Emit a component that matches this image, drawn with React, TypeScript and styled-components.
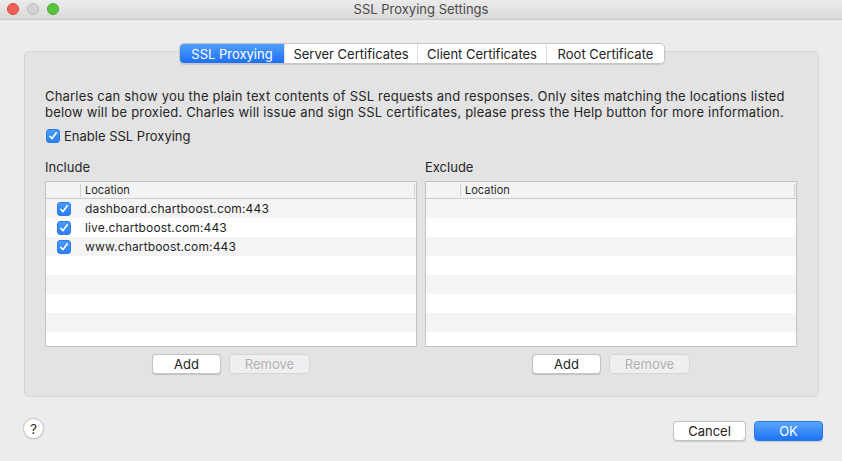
import React from "react";
import styled, { createGlobalStyle } from "styled-components";

const Global = createGlobalStyle`
  html, body { margin: 0; padding: 0; }
  body {
    background: #ececec;
    font-family: Inter, "Noto Sans", "Liberation Sans", sans-serif;
    font-size: 13px;
    color: #262626;
    -webkit-font-smoothing: antialiased;
  }
  * { box-sizing: border-box; }
`;

const Window = styled.div`
  width: 842px;
  height: 461px;
  background: #ececec;
  display: flex;
  flex-direction: column;
  overflow: hidden;
`;

const TitleBar = styled.div`
  position: relative;
  height: 20px;
  flex: none;
  border-bottom: 1px solid #c9c9c9;
  background: linear-gradient(#ebebeb, #d9d9d9);
  display: flex;
  align-items: center;
  justify-content: center;
`;

const Lights = styled.div`
  position: absolute;
  left: 7px;
  top: 3px;
  display: flex;
  gap: 8px;
`;

const Light = styled.span<{ $c: string; $b: string }>`
  width: 12px;
  height: 12px;
  border-radius: 50%;
  background: ${(p) => p.$c};
  border: 0.5px solid ${(p) => p.$b};
`;

const Title = styled.div`
  font-size: 13px;
  color: #4a4a4a;
  line-height: 19px;
`;

const Main = styled.div`
  flex: 1;
  display: flex;
  flex-direction: column;
  padding: 23px 23px 0 24px;
`;

const TabBar = styled.div`
  position: relative;
  z-index: 1;
  align-self: center;
  display: flex;
  height: 21px;
  margin-left: 1px;
  border: 1px solid #c6c6c6;
  border-radius: 5px;
  background: #fff;
  box-shadow: 0 0.5px 1px rgba(0, 0, 0, 0.12);
  overflow: hidden;
`;

const Tab = styled.div<{ $active?: boolean; $w: number }>`
  width: ${(p) => p.$w}px;
  display: flex;
  align-items: center;
  justify-content: center;
  font-size: 13px;
  color: ${(p) => (p.$active ? "#fff" : "#222")};
  background: ${(p) =>
    p.$active ? "linear-gradient(#519ffb, #1c6ff4)" : "#fff"};
  border-left: ${(p) => (p.$active ? "none" : "1px solid #dcdcdc")};
  &:first-child { border-left: none; }
`;

const Group = styled.div`
  margin-top: -13px;
  height: 346px;
  border: 1px solid #d6d6d6;
  border-radius: 5px;
  background: #e3e3e3;
  padding: 36px 21px 0 20px;
  display: flex;
  flex-direction: column;
`;

const Description = styled.p`
  margin: 0;
  font-size: 13px;
  line-height: 16px;
  letter-spacing: 0.19px;
  color: #262626;
  white-space: nowrap;
`;

const CheckRow = styled.label`
  margin-top: 8px;
  display: flex;
  align-items: center;
  gap: 4px;
  height: 16px;
  padding-left: 1px;
`;

const Box = styled.span`
  width: 14px;
  height: 14px;
  border-radius: 3px;
  background: linear-gradient(#4a9bfa, #2a7ff4);
  border: 0.5px solid #2f7de6;
  display: inline-flex;
  align-items: center;
  justify-content: center;
  flex: none;
`;

const Columns = styled.div`
  margin-top: 15px;
  display: grid;
  grid-template-columns: 372px 372px;
  gap: 8px;
`;

const Column = styled.div`
  display: flex;
  flex-direction: column;
`;

const Label = styled.div`
  height: 16px;
  line-height: 16px;
  font-size: 13px;
`;

const Table = styled.div`
  margin-top: 6px;
  height: 166px;
  border: 1px solid #c2c2c2;
  background: #fff;
  display: flex;
  flex-direction: column;
  overflow: hidden;
`;

const Header = styled.div`
  flex: none;
  height: 17px;
  border-bottom: 1px solid #cbcbcb;
  background: #f3f3f3;
  display: flex;
  align-items: center;
`;

const HeadCheck = styled.div`
  width: 35px;
  height: 13px;
  flex: none;
  border-right: 1px solid #d2d2d2;
`;

const HeadCell = styled.div`
  flex: 1;
  height: 13px;
  padding-left: 4px;
  font-size: 11px;
  line-height: 13px;
  color: #2a2a2a;
  border-right: 1px solid #d2d2d2;
  margin-right: 1px;
`;

const Row = styled.div<{ $alt: boolean }>`
  flex: none;
  height: 19px;
  display: flex;
  align-items: center;
  background: ${(p) => (p.$alt ? "#f4f4f4" : "#fff")};
`;

const CheckCell = styled.div`
  width: 35px;
  flex: none;
  display: flex;
  justify-content: center;
  padding-left: 1px;
`;

const TextCell = styled.div`
  padding-left: 4px;
  font-size: 12px;
  letter-spacing: 0.15px;
  color: #1f1f1f;
`;

const ButtonRow = styled.div`
  margin-top: 7px;
  display: flex;
  justify-content: center;
  gap: 8px;
`;

const Button = styled.button<{ $w: number; $disabled?: boolean; $primary?: boolean }>`
  width: ${(p) => p.$w}px;
  height: 20px;
  padding: 0;
  font-family: inherit;
  font-size: 13px;
  border-radius: 4px;
  color: ${(p) => (p.$primary ? "#fff" : p.$disabled ? "#b2b2b2" : "#222")};
  background: ${(p) =>
    p.$primary
      ? "linear-gradient(#5aa6fc, #1e72f5)"
      : p.$disabled
      ? "#efefef"
      : "#fff"};
  border: 1px solid
    ${(p) => (p.$primary ? "#2b78ee" : p.$disabled ? "#d6d6d6" : "#c3c3c3")};
  box-shadow: ${(p) => (p.$disabled ? "none" : "0 0.5px 1px rgba(0,0,0,0.15)")};
`;

const Footer = styled.div`
  height: 65px;
  flex: none;
  display: flex;
  align-items: flex-start;
  justify-content: space-between;
  padding: 24px 19px 0 23px;
`;

const Help = styled.div`
  width: 21px;
  height: 21px;
  margin-top: -3px;
  border-radius: 50%;
  background: #fff;
  border: 1px solid #c8c8c8;
  box-shadow: 0 0.5px 1px rgba(0, 0, 0, 0.15);
  display: flex;
  align-items: center;
  justify-content: center;
  font-size: 13px;
  color: #222;
`;

const FooterButtons = styled.div`
  display: flex;
  gap: 8px;
`;

const Check = () => (
  <Box>
    <svg width="10" height="10" viewBox="0 0 10 10">
      <path d="M1.8 5.3 L4 7.6 L8.3 1.8" fill="none" stroke="#fff" strokeWidth="1.6" strokeLinecap="round" strokeLinejoin="round" />
    </svg>
  </Box>
);

const ListTable = ({ items }: { items: string[] }) => {
  const rows = Array.from({ length: 8 }, (_, i) => items[i]);
  return (
    <Table>
      <Header>
        <HeadCheck />
        <HeadCell>Location</HeadCell>
      </Header>
      {rows.map((t, i) => (
        <Row key={i} $alt={i % 2 === 0}>
          <CheckCell>{t ? <Check /> : null}</CheckCell>
          {t ? <TextCell>{t}</TextCell> : null}
        </Row>
      ))}
    </Table>
  );
};

export default function App() {
  return (
    <>
      <Global />
      <Window>
        <TitleBar>
          <Lights>
            <Light $c="#ee5f58" $b="#d8463f" />
            <Light $c="#d3d3d3" $b="#bdbdbd" />
            <Light $c="#5ac43f" $b="#45a82d" />
          </Lights>
          <Title>SSL Proxying Settings</Title>
        </TitleBar>
        <Main>
          <TabBar>
            <Tab $active $w={104}>SSL Proxying</Tab>
            <Tab $w={133}>Server Certificates</Tab>
            <Tab $w={129}>Client Certificates</Tab>
            <Tab $w={118}>Root Certificate</Tab>
          </TabBar>
          <Group>
            <Description>
              Charles can show you the plain text contents of SSL requests and responses. Only sites matching the locations listed
              <br />
              below will be proxied. Charles will issue and sign SSL certificates, please press the Help button for more information.
            </Description>
            <CheckRow>
              <Check />
              <span>Enable SSL Proxying</span>
            </CheckRow>
            <Columns>
              <Column>
                <Label>Include</Label>
                <ListTable
                  items={[
                    "dashboard.chartboost.com:443",
                    "live.chartboost.com:443",
                    "www.chartboost.com:443",
                  ]}
                />
                <ButtonRow>
                  <Button $w={69}>Add</Button>
                  <Button $w={81} $disabled>Remove</Button>
                </ButtonRow>
              </Column>
              <Column>
                <Label>Exclude</Label>
                <ListTable items={[]} />
                <ButtonRow>
                  <Button $w={69}>Add</Button>
                  <Button $w={81} $disabled>Remove</Button>
                </ButtonRow>
              </Column>
            </Columns>
          </Group>
        </Main>
        <Footer>
          <Help>?</Help>
          <FooterButtons>
            <Button $w={73}>Cancel</Button>
            <Button $w={69} $primary>OK</Button>
          </FooterButtons>
        </Footer>
      </Window>
    </>
  );
}
